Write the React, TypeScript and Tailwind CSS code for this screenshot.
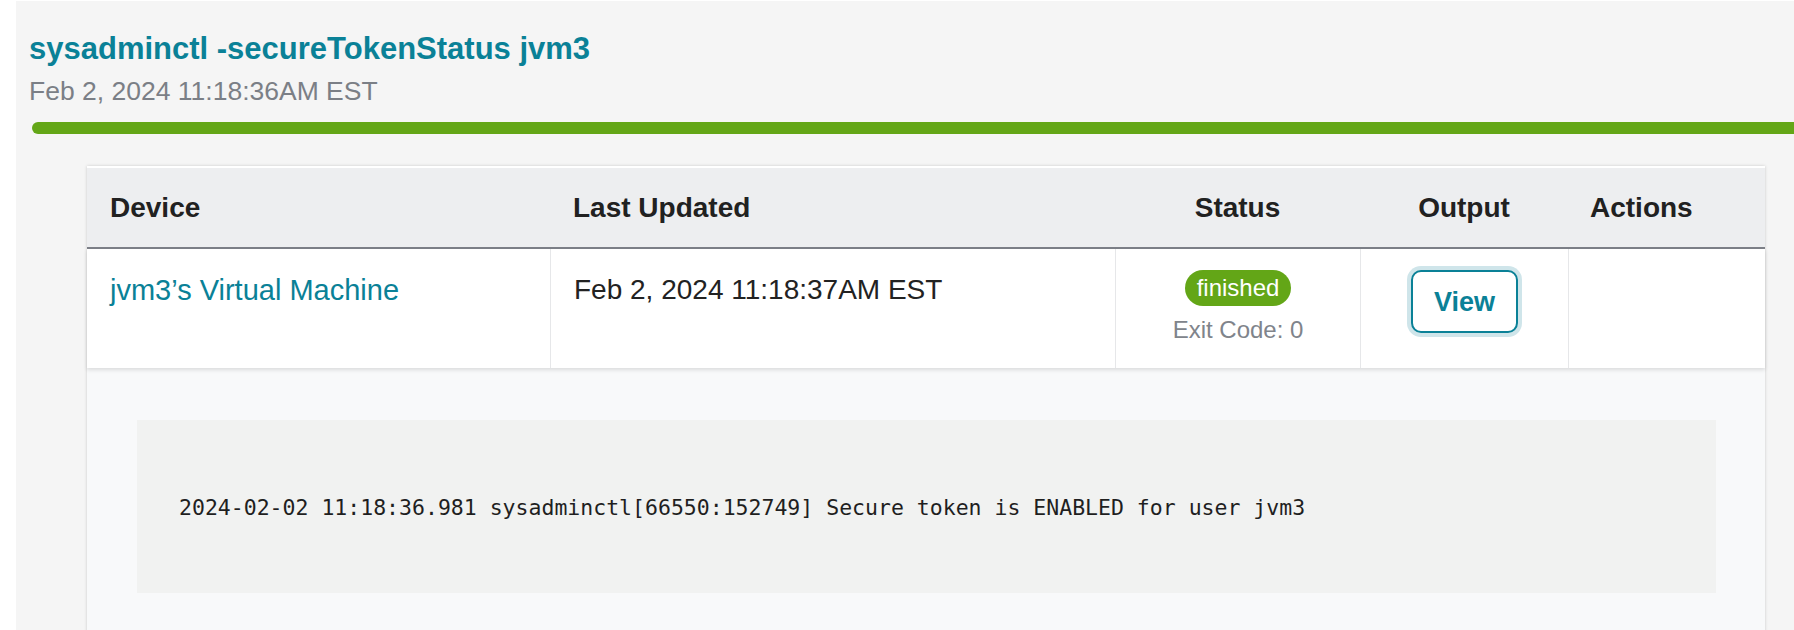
import React from 'react';

const sans = { fontFamily: '"Liberation Sans", Arial, sans-serif' };

export default function App() {
  return (
    <div className="min-h-screen bg-white pl-[16px] pt-[1px]" style={sans}>
      <div className="bg-[#f5f5f5] h-[629px] overflow-hidden">
        <div className="pl-[13px] pt-[30px]">
          <h1 className="text-[31px] leading-[36px] font-bold text-[#0a8197]">sysadminctl -secureTokenStatus jvm3</h1>
          <p className="mt-[8px] text-[26.5px] leading-[32px] text-[#7b7f86]">Feb 2, 2024 11:18:36AM EST</p>
        </div>
        <div className="ml-[16px] mt-[15px] h-[12px] w-[1800px] rounded-l-full bg-[#63a617]" />

        <div className="ml-[71px] mr-[29px] mt-[32px] border-t-2 border-white bg-white shadow-[0_0_3px_rgba(0,0,0,0.18)]">
          <div className="grid grid-cols-[463px_565px_245px_208px_1fr] h-[81px] bg-[#edeef0] border-b-2 border-[#7d8088] text-[28px] font-bold text-[#212121] items-center">
            <div className="pl-[23px]">Device</div>
            <div className="pl-[23px]">Last Updated</div>
            <div className="text-center">Status</div>
            <div className="text-center">Output</div>
            <div className="pl-[22px]">Actions</div>
          </div>

          <div className="relative z-10 grid grid-cols-[463px_565px_245px_208px_1fr] h-[119px] bg-white shadow-[0_2px_4px_rgba(0,0,0,0.12)] text-[28px] leading-[36px]">
            <div className="pl-[23px] pt-[23px] text-[29px] text-[#0a8197]">jvm3’s Virtual Machine</div>
            <div className="pl-[23px] pt-[23px] border-l border-[#e6e7e9] text-[#222]">Feb 2, 2024 11:18:37AM EST</div>
            <div className="border-l border-[#e6e7e9] flex flex-col items-center pt-[21px]">
              <span className="rounded-full bg-[#63a617] px-[12px] h-[36px] leading-[36px] text-[24px] text-white">finished</span>
              <span className="mt-[10px] text-[24px] leading-[28px] text-[#80848b]">Exit Code: 0</span>
            </div>
            <div className="border-l border-[#e6e7e9] flex justify-center pt-[21px]">
              <button className="h-[63px] w-[107px] rounded-[10px] border-2 border-[#0a8197] bg-white text-[27px] font-bold text-[#0a8197] ring-4 ring-[#cfe5ea]">View</button>
            </div>
            <div className="border-l border-[#e6e7e9]" />
          </div>

          <div className="bg-[#f8f9fa] px-[50px] pt-[52px] pb-[40px]">
            <div className="h-[173px] mr-[-1px] bg-[#f1f2f1] flex items-center pl-[42px]">
              <pre className="text-[21.5px] leading-[32px] pt-[2px] text-[#1f1f1f]" style={{ fontFamily: '"DejaVu Sans Mono", monospace' }}>2024-02-02 11:18:36.981 sysadminctl[66550:152749] Secure token is ENABLED for user jvm3</pre>
            </div>
          </div>
        </div>
      </div>
    </div>
  );
}
